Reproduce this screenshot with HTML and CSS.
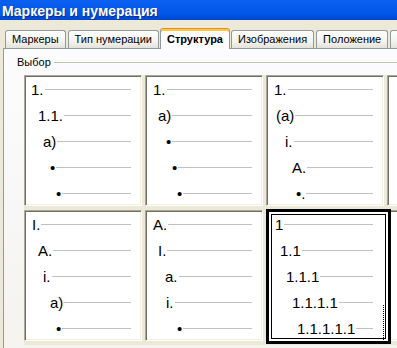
FILE: index.html
```html
<!DOCTYPE html>
<html lang="ru">
<head>
  <meta charset="UTF-8" />
  <title>Маркеры и нумерация</title>
  <link rel="stylesheet" href="styles.css">
</head>
<body>
  <div class="titlebar">Маркеры и нумерация</div>

  <div class="tabbar">
    <div class="tab">Маркеры</div>
    <div class="tab">Тип нумерации</div>
    <div class="tab active">Структура</div>
    <div class="tab">Изображения</div>
    <div class="tab">Положение</div>
    <div class="tab">Настройки</div>
  </div>

  <div class="page">
    <div class="section">
      <span class="section-label">Выбор</span>
      <span class="section-line"></span>
    </div>
    <div id="valueset" class="valueset"></div>
  </div>

  <script>
    // label + indent (px) for every level of a preset
    const PRESETS = [
      [["1.", 6], ["1.1.", 13], ["a)", 18], ["•", 25], ["•", 31]],
      [["1.", 7], ["a)", 12], ["•", 20], ["•", 26], ["•", 31]],
      [["1.", 7], ["(a)", 9], ["i.", 18], ["A.", 25], ["•.", 29]],
      [],
      [["I.", 7], ["A.", 13], ["i.", 18], ["a)", 25], ["•", 31]],
      [["A.", 7], ["I.", 12], ["a.", 19], ["i.", 20], ["•", 31]],
      [["1", 8], ["1.1", 13], ["1.1.1", 19], ["1.1.1.1", 25], ["1.1.1.1.1", 30]],
      []
    ];
    const SELECTED = 6;

    const valueset = document.getElementById("valueset");

    PRESETS.forEach((levels, i) => {
      const cell = document.createElement("div");
      cell.className = "cell";
      if (i === SELECTED) cell.classList.add("selected");

      levels.forEach(([text, indent]) => {
        const row = document.createElement("div");
        row.className = "level";
        row.style.paddingLeft = indent + "px";

        const label = document.createElement("span");
        label.className = "level-label";
        label.textContent = text;

        const rule = document.createElement("span");
        rule.className = "level-rule";

        row.appendChild(label);
        row.appendChild(rule);
        cell.appendChild(row);
      });

      if (i === SELECTED) {
        const focus = document.createElement("span");
        focus.className = "focus-rect";
        cell.appendChild(focus);
      }

      valueset.appendChild(cell);
    });
  </script>
</body>
</html>
```

FILE: styles.css
```css
body {
  margin: 0;
  width: 397px;
  height: 348px;
  overflow: hidden;
  background: #ece9d8;
  font-family: 'Liberation Sans', Arial, sans-serif;
  color: #000;
}

.titlebar {
  box-sizing: border-box;
  height: 20px;
  padding: 4px 0 0 2px;
  background: linear-gradient(#0b60f0, #0056e6 70%, #0047c9);
  color: #fff;
  font-size: 14px;
  font-weight: bold;
  line-height: 14px;
  text-shadow: 1px 1px 0 #0a2a9a;
  white-space: nowrap;
}

.tabbar {
  display: flex;
  align-items: flex-end;
  gap: 2px;
  height: 28px;
  padding-left: 5px;
  white-space: nowrap;
}

.tab {
  flex: none;
  height: 17px;
  padding: 0 6px;
  border: 1px solid #919b9c;
  border-bottom: none;
  border-radius: 3px 3px 0 0;
  background: linear-gradient(#ffffff, #f4f3ee 60%, #e3e2da);
  font-size: 11px;
  line-height: 17px;
}

.tab.active {
  position: relative;
  z-index: 1;
  height: 18px;
  margin: 0 -1px -1px;
  padding-top: 2px;
  border-top-color: #e68b2c;
  background: #fcfcfe;
  box-shadow: inset 0 2px 0 #ffc73c;
  font-weight: bold;
}

.page {
  height: 299px;
  margin-left: 3px;
  padding: 7px 0 0 13px;
  border-top: 1px solid #919b9c;
  border-left: 1px solid #919b9c;
  background: linear-gradient(#fcfcfe, #f4f3ee);
}

.section {
  display: flex;
  align-items: center;
}

.section-label {
  font-size: 11px;
  line-height: 13px;
}

.section-line {
  flex: 1;
  margin-left: 3px;
  border-top: 1px solid #c5c2b2;
}

.valueset {
  display: grid;
  grid-template-columns: repeat(4, 118px);
  grid-auto-rows: 131px;
  column-gap: 3px;
  row-gap: 4px;
  width: max-content;
  margin: 6px 0 0 7px;
  padding-bottom: 4px;
  background: #ece9d8;
}

.cell {
  padding-right: 10px;
  background: #fff;
  border: 1px solid;
  border-color: #aca899 #fff #fff #aca899;
  box-shadow: inset 1px 1px 0 #716f64, inset -1px -1px 0 #f1efe2;
}

.cell.selected {
  position: relative;
  z-index: 1;
  margin: -1px -7px -3px 0;
  padding: 1px 17px 0 0;
  border-color: #000;
  box-shadow: inset 0 0 0 2px #000, inset 0 0 0 4px #fff, inset 0 0 0 5px #000;
}

.level {
  display: flex;
  align-items: center;
  height: 26px;
}

.level-label {
  font-size: 15px;
  line-height: 17px;
  white-space: nowrap;
}

.level-rule {
  flex: 1;
  height: 1px;
  margin-left: 1px;
  background: #c0c0c0;
}

.focus-rect {
  position: absolute;
  right: 6px;
  bottom: 1px;
  width: 50px;
  height: 36px;
  border-right: 1px dotted #000;
  border-bottom: 1px dotted #000;
}
```
